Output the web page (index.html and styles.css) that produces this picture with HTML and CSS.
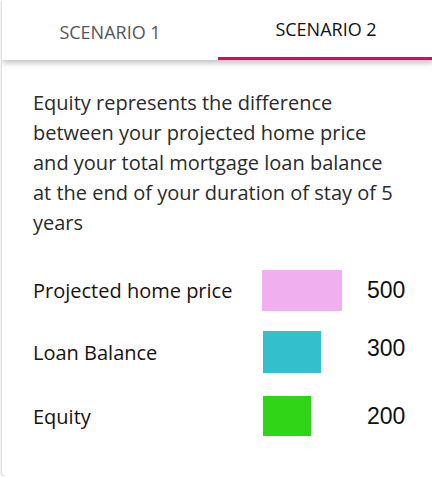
FILE: index.html
```html
<!DOCTYPE html>
<html>
<head>
<meta charset="utf-8">
<link rel="stylesheet" href="styles.css">
</head>
<body>
<div class="card">
  <div class="tabs">
    <div class="tab">SCENARIO 1</div>
    <div class="tab active">SCENARIO 2</div>
  </div>
  <div class="content">
    <p class="desc">Equity represents the difference between your projected home price and your total mortgage loan balance at the end of your duration of stay of 5 years</p>
    <div class="rows">
      <div class="row r1">
        <span class="label">Projected home price</span>
        <span class="bar pink"></span>
        <span class="value">500</span>
      </div>
      <div class="row r2">
        <span class="label">Loan Balance</span>
        <span class="bar teal"></span>
        <span class="value">300</span>
      </div>
      <div class="row r3">
        <span class="label">Equity</span>
        <span class="bar green"></span>
        <span class="value">200</span>
      </div>
    </div>
  </div>
</div>
</body>
</html>
```
FILE: styles.css
```css
html, body { margin: 0; padding: 0; background: #fff; }
body { font-family: "Open Sans", sans-serif; }
.card {
  margin-left: 2px;
  width: 432px;
  height: 476px;
  border-radius: 0 0 4px 4px;
  box-shadow: 0 1px 3px rgba(0,0,0,0.35);
  background: #fff;
  overflow: hidden;
}
.tabs {
  display: flex;
  height: 60px;
  position: relative;
  z-index: 1;
  box-shadow: 0 3px 6px rgba(0,0,0,0.25);
  background: #fff;
}
.tab {
  flex: 1;
  display: flex;
  align-items: center;
  justify-content: center;
  font-size: 18px;
  color: #555;
  box-sizing: border-box;
  padding-top: 3px;
}
.tab.active {
  color: #111;
  border-bottom: 3px solid #e8005a;
  padding-top: 1px;
}
.content {
  padding: 28px 0 0 31px;
}
.desc {
  margin: 0;
  font-size: 20px;
  line-height: 30px;
  color: #2a2a2a;
  width: 366px;
}
.rows {
  margin-top: 32px;
}
.row {
  display: grid;
  grid-template-columns: 229px 105px auto;
  align-items: center;
}
.label { font-size: 20px; color: #1a1010; }
.value { font-family: "Liberation Sans", Arial, sans-serif; font-size: 23px; color: #111; }
.bar { display: block; }
.pink { background: #f0b0f0; width: 80px; height: 41px; }
.teal { background: #33bfcc; width: 58px; height: 42px; margin-left: 1px; }
.green { background: #2fd615; width: 48px; height: 40px; margin-left: 1px; }
.r2 { margin-top: 20px; }
.r3 { margin-top: 23px; }
.r2 .value { margin-top: -8px; }
```
